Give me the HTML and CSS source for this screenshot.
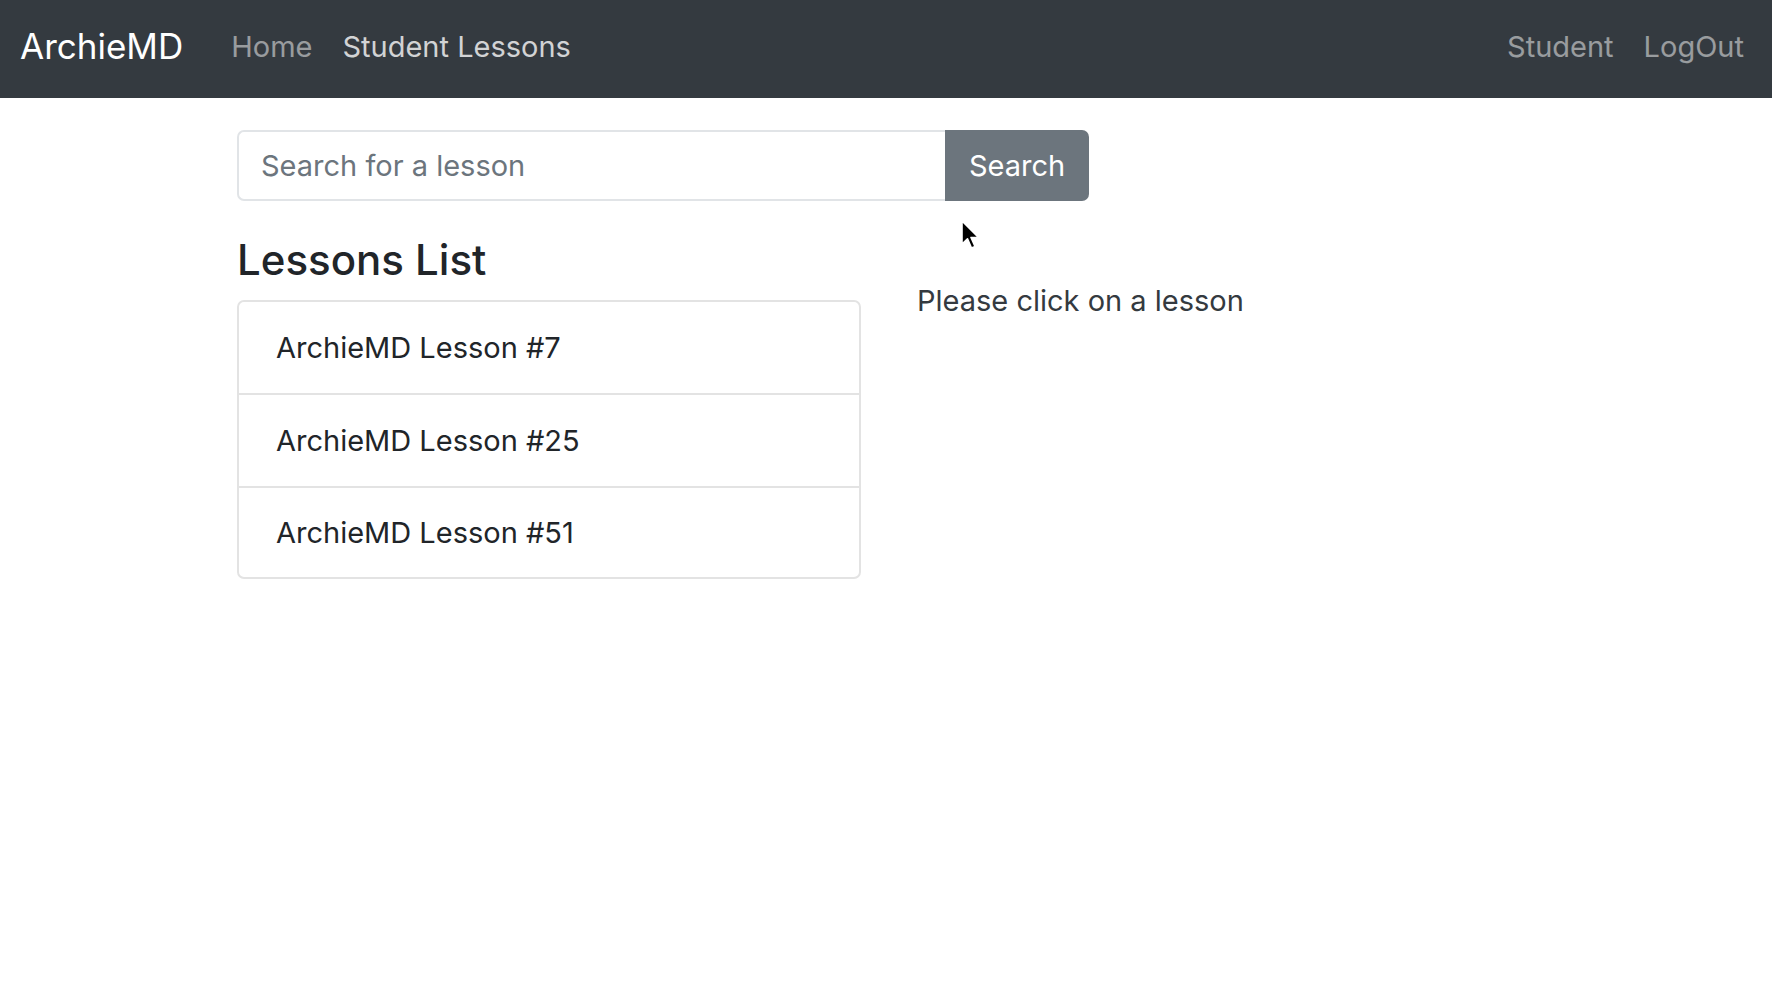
FILE: index.html
```html
<!DOCTYPE html>
<html lang="en">
<head>
<meta charset="utf-8">
<title>ArchieMD</title>
<link rel="stylesheet" href="styles.css">
</head>
<body>
<nav class="navbar">
  <a class="brand" href="#">ArchieMD</a>
  <ul class="nav">
    <li><a class="nav-link" href="#">Home</a></li>
    <li><a class="nav-link active" href="#">Student Lessons</a></li>
  </ul>
  <ul class="nav nav-right">
    <li><a class="nav-link" href="#">Student</a></li>
    <li><a class="nav-link" href="#">LogOut</a></li>
  </ul>
</nav>

<main class="container">
  <form class="search">
    <input class="search-input" type="text" placeholder="Search for a lesson">
    <button class="search-btn" type="button">Search</button>
  </form>

  <div class="row">
    <section class="col-list">
      <h4 class="list-title">Lessons List</h4>
      <ul class="list-group">
        <li class="list-item">ArchieMD Lesson #7</li>
        <li class="list-item">ArchieMD Lesson #25</li>
        <li class="list-item">ArchieMD Lesson #51</li>
      </ul>
    </section>
    <section class="col-detail">
      <p class="hint">Please click on a lesson</p>
    </section>
  </div>

  <svg class="cursor" width="22" height="32" viewBox="0 0 22 32" aria-hidden="true">
    <path d="M2 1 L2 24 L7.5 18.8 L11.5 28 L15 26.5 L11 17.5 L18.5 17.5 Z" fill="#000" stroke="#fff" stroke-width="1.6" stroke-linejoin="round"/>
  </svg>
</main>
</body>
</html>
```

FILE: styles.css
```css
* {
  box-sizing: border-box;
}

body {
  margin: 0;
  font-family: Inter, "Noto Sans", "Liberation Sans", sans-serif;
  color: #212529;
  background: #fff;
}

/* Navbar */
.navbar {
  height: 98px;
  background: #343a40;
  display: flex;
  align-items: center;
  padding: 0 13px 5px 20px;
}

.brand {
  font-size: 35px;
  color: #fff;
  text-decoration: none;
  margin-right: 33px;
  line-height: 1;
}

.nav {
  list-style: none;
  margin: 0;
  padding: 0;
  display: flex;
  align-items: center;
}

.nav-right {
  margin-left: auto;
}

.nav-link {
  display: block;
  padding: 0 15px;
  font-size: 29px;
  line-height: 42px;
  color: rgba(255, 255, 255, 0.5);
  text-decoration: none;
}

.nav-link.active {
  color: rgba(255, 255, 255, 0.78);
}

/* Main */
.container {
  position: relative;
  width: 1298px;
  margin: 0 auto;
  padding-top: 32px;
}

.search {
  display: flex;
  width: 852px;
  height: 71px;
  margin: 0;
}

.search-input {
  flex: 1;
  min-width: 0;
  height: 100%;
  border: 2px solid #e1e4e7;
  border-right: none;
  border-radius: 7px 0 0 7px;
  padding: 0 22px;
  font-family: inherit;
  font-size: 29px;
  color: #495057;
  outline: none;
}

.search-input::placeholder {
  color: #6c757d;
}

.search-btn {
  width: 144px;
  height: 100%;
  border: none;
  border-radius: 0 7px 7px 0;
  background: #6c757d;
  color: #fff;
  font-family: inherit;
  font-size: 29px;
  padding: 0;
}

.row {
  display: grid;
  grid-template-columns: 624px 1fr;
  column-gap: 56px;
  margin-top: 34px;
}

.list-title {
  margin: 0 0 15px;
  font-size: 42px;
  font-weight: 500;
  line-height: 50px;
}

.list-group {
  list-style: none;
  margin: 0;
  padding: 0;
  border: 2px solid #e3e3e3;
  border-radius: 7px;
}

.list-item {
  height: 93px;
  display: flex;
  align-items: center;
  padding-left: 37px;
  font-size: 29px;
  border-bottom: 2px solid #e3e3e3;
}

.list-item:last-child {
  border-bottom: none;
  height: 89px;
}

.col-detail {
  padding-top: 45px;
}

.hint {
  margin: 0;
  font-size: 29px;
  line-height: 42px;
  color: #343a40;
}

.cursor {
  position: absolute;
  left: 723px;
  top: 122px;
}
```
